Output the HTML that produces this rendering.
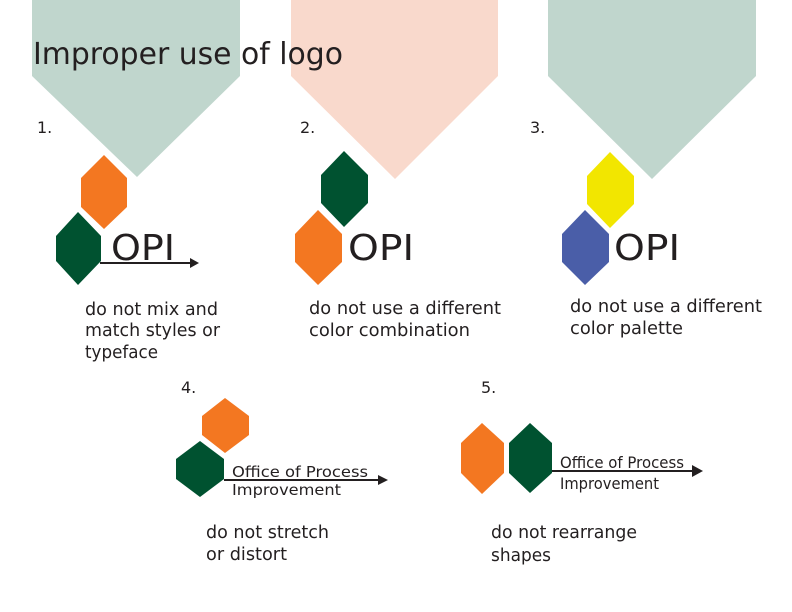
<!DOCTYPE html>
<html><head><meta charset="utf-8"><style>
html,body{margin:0;padding:0;background:#fff;}
svg{display:block;}
text{font-family:"DejaVu Sans","Liberation Sans",sans-serif;fill:#231f20;}
</style></head><body>
<svg width="792" height="612" viewBox="0 0 792 612" xmlns="http://www.w3.org/2000/svg">
<polygon points="32,0 240,0 240,76 137,177 32,76" fill="#c0d6cd"/>
<polygon points="291,0 498,0 498,76 395,179 291,76" fill="#f9d9cc"/>
<polygon points="548,0 756,0 756,76 652,179 548,76" fill="#c0d6cd"/>
<text x="33" y="64" font-size="30" textLength="310" lengthAdjust="spacingAndGlyphs">Improper use of logo</text>
<text x="37" y="133" font-size="16">1.</text>
<text x="300" y="133" font-size="16">2.</text>
<text x="530" y="133" font-size="16">3.</text>
<!-- 1 -->
<polygon points="104,155 127,178 127,207 104,229 81,207 81,178" fill="#f37721"/>
<polygon points="78,212 101,236 101,261 78,285 56,261 56,236" fill="#005230"/>
<text x="111" y="260" font-size="36" textLength="64" lengthAdjust="spacingAndGlyphs">OPI</text>
<line x1="100" y1="263" x2="192" y2="263" stroke="#231f20" stroke-width="2"/>
<polygon points="190,258 199,263 190,268" fill="#231f20"/>
<text font-size="18"><tspan x="85" y="315" textLength="133" lengthAdjust="spacingAndGlyphs">do not mix and</tspan><tspan x="85" y="336" textLength="135" lengthAdjust="spacingAndGlyphs">match styles or</tspan><tspan x="85" y="358" textLength="73" lengthAdjust="spacingAndGlyphs">typeface</tspan></text>
<!-- 2 -->
<polygon points="344,151 368,175 368,203 344,227 321,203 321,175" fill="#005230"/>
<polygon points="318,210 342,234 342,262 318,285 295,262 295,234" fill="#f37721"/>
<text x="348" y="260" font-size="36" textLength="66" lengthAdjust="spacingAndGlyphs">OPI</text>
<text font-size="18"><tspan x="309" y="314" textLength="192" lengthAdjust="spacingAndGlyphs">do not use a different</tspan><tspan x="309" y="336" textLength="161" lengthAdjust="spacingAndGlyphs">color combination</tspan></text>
<!-- 3 -->
<polygon points="610,152 634,176 634,204 610,228 587,204 587,176" fill="#f2e600"/>
<polygon points="585,210 609,234 609,262 585,285 562,262 562,234" fill="#4a5ea8"/>
<text x="614" y="260" font-size="36" textLength="66" lengthAdjust="spacingAndGlyphs">OPI</text>
<text font-size="18"><tspan x="570" y="312" textLength="192" lengthAdjust="spacingAndGlyphs">do not use a different</tspan><tspan x="570" y="334" textLength="113" lengthAdjust="spacingAndGlyphs">color palette</tspan></text>
<!-- 4 -->
<text x="181" y="393" font-size="16">4.</text>
<polygon points="225,398 249,416 249,435 225,453 202,435 202,416" fill="#f37721"/>
<polygon points="200,441 224,459 224,479 200,497 176,479 176,459" fill="#005230"/>
<text x="232" y="477" font-size="15" textLength="136" lengthAdjust="spacingAndGlyphs">Office of Process</text>
<text x="232" y="495" font-size="15" textLength="109" lengthAdjust="spacingAndGlyphs">Improvement</text>
<line x1="224" y1="480" x2="380" y2="480" stroke="#231f20" stroke-width="2"/>
<polygon points="378,475 388,480 378,485" fill="#231f20"/>
<text font-size="18"><tspan x="206" y="538" textLength="123" lengthAdjust="spacingAndGlyphs">do not stretch</tspan><tspan x="206" y="560" textLength="81" lengthAdjust="spacingAndGlyphs">or distort</tspan></text>
<!-- 5 -->
<text x="481" y="393" font-size="16">5.</text>
<polygon points="482,423 504,443 504,473 482,494 461,473 461,443" fill="#f37721"/>
<polygon points="530,423 552,443 552,473 530,493 509,473 509,443" fill="#005230"/>
<text x="560" y="468" font-size="16" textLength="124" lengthAdjust="spacingAndGlyphs">Office of Process</text>
<text x="560" y="489" font-size="16" textLength="99" lengthAdjust="spacingAndGlyphs">Improvement</text>
<line x1="552" y1="471" x2="694" y2="471" stroke="#231f20" stroke-width="2"/>
<polygon points="692,465 703,471 692,477" fill="#231f20"/>
<text font-size="18"><tspan x="491" y="538" textLength="146" lengthAdjust="spacingAndGlyphs">do not rearrange</tspan><tspan x="491" y="561" textLength="60" lengthAdjust="spacingAndGlyphs">shapes</tspan></text>
</svg>
</body></html>
